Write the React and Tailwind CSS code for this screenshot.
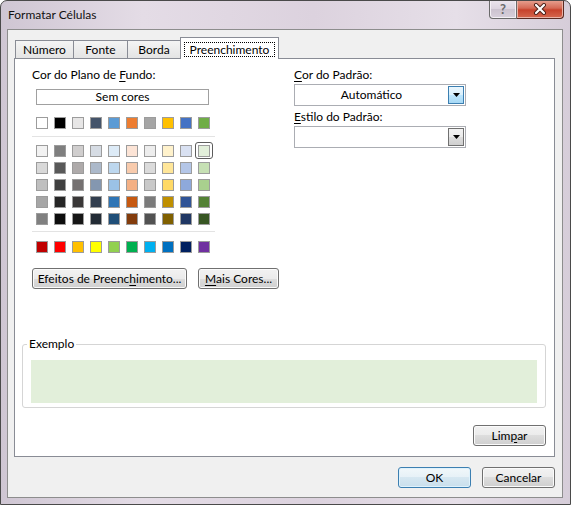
import React from 'react';

// Office theme colours, first row then the tints/shades, then the standard colours
const themeRow = [
  'bg-[#ffffff]', 'bg-[#000000]', 'bg-[#e7e6e6]', 'bg-[#44546a]', 'bg-[#5b9bd5]',
  'bg-[#ed7d31]', 'bg-[#a5a5a5]', 'bg-[#ffc000]', 'bg-[#4472c4]', 'bg-[#70ad47]',
];

const shadeRows = [
  ['bg-[#f2f2f2]', 'bg-[#7f7f7f]', 'bg-[#d0cece]', 'bg-[#d6dce4]', 'bg-[#ddebf7]', 'bg-[#fce4d6]', 'bg-[#ededed]', 'bg-[#fff2cc]', 'bg-[#d9e1f2]', 'bg-[#e2efda]'],
  ['bg-[#d9d9d9]', 'bg-[#595959]', 'bg-[#aeaaaa]', 'bg-[#acb9ca]', 'bg-[#bdd7ee]', 'bg-[#f8cbad]', 'bg-[#dbdbdb]', 'bg-[#ffe699]', 'bg-[#b4c6e7]', 'bg-[#c6e0b4]'],
  ['bg-[#bfbfbf]', 'bg-[#404040]', 'bg-[#757171]', 'bg-[#8497b0]', 'bg-[#9bc2e6]', 'bg-[#f4b084]', 'bg-[#c9c9c9]', 'bg-[#ffd966]', 'bg-[#8ea9db]', 'bg-[#a9d08e]'],
  ['bg-[#a6a6a6]', 'bg-[#262626]', 'bg-[#3a3838]', 'bg-[#333f4f]', 'bg-[#2f75b5]', 'bg-[#c65911]', 'bg-[#7b7b7b]', 'bg-[#bf8f00]', 'bg-[#305496]', 'bg-[#548235]'],
  ['bg-[#808080]', 'bg-[#0d0d0d]', 'bg-[#161616]', 'bg-[#222b35]', 'bg-[#1f4e78]', 'bg-[#833c0c]', 'bg-[#525252]', 'bg-[#806000]', 'bg-[#203764]', 'bg-[#375623]'],
];

const standardRow = [
  'bg-[#c00000]', 'bg-[#ff0000]', 'bg-[#ffc000]', 'bg-[#ffff00]', 'bg-[#92d050]',
  'bg-[#00b050]', 'bg-[#00b0f0]', 'bg-[#0070c0]', 'bg-[#002060]', 'bg-[#7030a0]',
];

const btn =
  'h-[21px] flex items-center justify-center rounded-[3px] border border-[#707070] shadow-[inset_0_0_0_1px_#fbfbfb] bg-[linear-gradient(#f2f2f2_0%,#ebebeb_50%,#dddddd_50%,#cfcfcf_100%)]';

function Swatch({ color, selected }) {
  return (
    <div
      className={
        selected
          ? 'w-[18px] h-[17px] flex items-center justify-center rounded-[3px] border border-[#5c5c5c] shadow-[inset_0_0_0_1px_#ffffff]'
          : 'w-[18px] h-[17px] flex items-center justify-center'
      }
    >
      <span className={`block w-[12px] h-[12px] border border-[#9c9c9c] ${color}`} />
    </div>
  );
}

function SwatchRow({ colors, selectedIndex = -1 }) {
  return (
    <div className="flex">
      {colors.map((c, i) => (
        <Swatch key={i} color={c} selected={i === selectedIndex} />
      ))}
    </div>
  );
}

function Arrow() {
  return (
    <svg width="7" height="4" viewBox="0 0 7 4">
      <path d="M0 0H7L3.5 4Z" fill="#000" />
    </svg>
  );
}

function Combo({ value, active }) {
  return (
    <div className="w-[172px] h-[22px] flex border border-[#abadb3] bg-white">
      <div className="flex-1 flex items-center justify-center leading-[14px]">{value}</div>
      <div
        className={
          active
            ? 'w-[16px] my-[1px] mr-[1px] flex items-center justify-center border border-[#3c7fb1] bg-[linear-gradient(#eaf6fd,#d9f0fc_50%,#bee6fd_50%,#a7d9f5)]'
            : 'w-[16px] my-[1px] mr-[1px] flex items-center justify-center border border-[#707070] bg-[linear-gradient(#f2f2f2,#ebebeb_50%,#dddddd_50%,#cfcfcf)]'
        }
      >
        <Arrow />
      </div>
    </div>
  );
}

export default function App() {
  return (
    <div className="w-[571px] h-[505px] flex flex-col rounded-t-[7px] border border-[#4a4a4a] bg-[linear-gradient(90deg,#cfc6d3,#e4dce6_25%,#dcd2de_55%,#e6dfe8_80%,#d6cdd9)] text-[12px] leading-[16px] text-black font-['Lato',sans-serif] overflow-hidden">
      {/* title bar */}
      <div className="h-[28px] flex items-start">
        <div className="pl-[7px] pt-[6px] text-[12px] text-[#111]">Formatar Células</div>
        <div className="ml-auto mr-[6px] flex h-[19px] -mt-px">
          <div className="w-[28px] flex items-center justify-center rounded-bl-[4px] border border-t-0 border-[#6a6a6a] bg-[linear-gradient(#ece6ee,#dcd4df_50%,#cbc2cf_50%,#d8d0db)] shadow-[inset_0_0_0_1px_#f4f0f5]">
            <span className="font-bold text-[13px] text-[#6b6b6b] leading-none">?</span>
          </div>
          <div className="w-[47px] flex items-center justify-center rounded-br-[4px] border border-t-0 border-l-0 border-[#5a2a22] bg-[linear-gradient(#e8a494,#d56a56_45%,#c7422c_55%,#d5684f)] shadow-[inset_0_0_0_1px_#eab2a6]">
            <svg width="14" height="12" viewBox="0 0 14 12">
              <path d="M3 2L11 10M11 2L3 10" stroke="#4a1f18" strokeWidth="4" strokeLinecap="round" />
              <path d="M3 2L11 10M11 2L3 10" stroke="#ffffff" strokeWidth="2.2" strokeLinecap="round" />
            </svg>
          </div>
        </div>
      </div>

      {/* client area */}
      <div className="ml-[6px] mr-[7px] h-[469px] border border-[#8d8d8d] bg-[#f0f0f0] pt-[7px] pl-[6px] pr-[7px]">
        {/* tabs */}
        <div className="h-[21px] flex items-end pl-[1px]">
          <div className="w-[59px] h-[18px] flex items-center justify-center border border-b-0 border-[#898c95] bg-[linear-gradient(#f4f4f4,#e4e4e4)]">
            Número
          </div>
          <div className="w-[55px] h-[18px] -ml-px flex items-center justify-center border border-b-0 border-[#898c95] bg-[linear-gradient(#f4f4f4,#e4e4e4)]">
            Fonte
          </div>
          <div className="w-[54px] h-[18px] -ml-px flex items-center justify-center border border-b-0 border-[#898c95] bg-[linear-gradient(#f4f4f4,#e4e4e4)]">
            Borda
          </div>
          <div className="w-[99px] h-[22px] -ml-px -mb-px relative z-10 flex justify-center border border-b-0 border-[#898c95] bg-white pt-[4px]">
            <span className="h-[15px] px-[5px] border border-dotted border-black leading-[13px]">Preenchimento</span>
          </div>
        </div>

        {/* tab page */}
        <div className="h-[399px] border border-[#898c95] bg-white flex flex-col">
          <div className="flex">
            {/* background colour */}
            <div className="w-[279px] pl-[17px] flex flex-col">
              <div className="mt-[8px]">
                Cor do Plano de <span className="underline underline-offset-2">F</span>undo:
              </div>
              <div className="ml-[4px] mt-[6px] w-[173px] h-[16px] border border-[#a0a0a0] flex items-center justify-center leading-[14px]">
                Sem cores
              </div>
              <div className="mt-[9px] ml-[1px]">
                <SwatchRow colors={themeRow} />
              </div>
              <div className="mt-[5px] w-[183px] h-px bg-[#e3e3e3]" />
              <div className="mt-[5px] ml-[1px] flex flex-col">
                {shadeRows.map((row, i) => (
                  <SwatchRow key={i} colors={row} selectedIndex={i === 0 ? 9 : -1} />
                ))}
              </div>
              <div className="mt-[4px] w-[183px] h-px bg-[#e3e3e3]" />
              <div className="mt-[6px] ml-[1px]">
                <SwatchRow colors={standardRow} />
              </div>
              <div className="mt-[13px] flex gap-[11px]">
                <div className={`${btn} w-[155px]`}>
                  Efeitos de Preenc<span className="underline underline-offset-2">h</span>imento...
                </div>
                <div className={`${btn} w-[81px]`}>
                  <span className="underline underline-offset-2">M</span>ais Cores...
                </div>
              </div>
            </div>

            {/* pattern */}
            <div className="flex flex-col">
              <div className="mt-[8px]">
                <span className="underline underline-offset-2">C</span>or do Padrão:
              </div>
              <div className="mt-[1px]">
                <Combo value="Automático" active />
              </div>
              <div className="mt-[3px]">
                <span className="underline underline-offset-2">E</span>stilo do Padrão:
              </div>
              <div className="mt-[1px]">
                <Combo value="" />
              </div>
            </div>
          </div>

          {/* sample */}
          <div className="ml-[7px] mt-[55px] w-[524px] h-[64px] relative rounded-[3px] border border-[#d5d5d5] pt-[15px] px-[8px]">
            <span className="absolute left-[4px] -top-[8px] bg-white px-[2px] leading-[14px]">Exemplo</span>
            <div className="h-[43px] bg-[#e2efda]" />
          </div>

          <div className="mt-[17px] w-[531px] flex justify-end">
            <div className={`${btn} w-[73px]`}>
              Lim<span className="underline underline-offset-2">p</span>ar
            </div>
          </div>
        </div>

        {/* dialog buttons */}
        <div className="mt-[10px] flex justify-end gap-[11px]">
          <div className="w-[73px] h-[21px] flex items-center justify-center rounded-[3px] border border-[#3c7fb1] shadow-[inset_0_0_0_1px_#dff2fc] bg-[linear-gradient(#f1f7fa_0%,#e6f1f7_50%,#d6e7f1_50%,#c9dfec_100%)]">
            OK
          </div>
          <div className={`${btn} w-[73px]`}>Cancelar</div>
        </div>
      </div>
    </div>
  );
}
